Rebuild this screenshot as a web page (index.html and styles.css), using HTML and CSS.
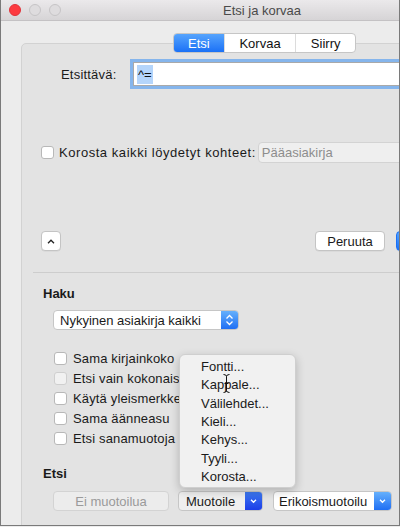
FILE: index.html
```html
<!DOCTYPE html>
<html lang="fi">
<head>
<meta charset="utf-8">
<title>Etsi ja korvaa</title>
<link rel="stylesheet" href="styles.css">
</head>
<body>
<div class="window">
  <div class="titlebar">
    <div class="lights">
      <span class="light red"></span>
      <span class="light"></span>
      <span class="light"></span>
    </div>
    <div class="title">Etsi ja korvaa</div>
  </div>
  <div class="content">
    <div class="tabs">
      <span class="tab active t1">Etsi</span>
      <span class="tab t2">Korvaa</span>
      <span class="tab t3">Siirry</span>
    </div>
    <div class="panel">
      <div class="row find-row">
        <label class="find-label">Etsittävä:</label>
        <div class="find-input"><span class="sel">^=</span></div>
      </div>
      <div class="row highlight-row">
        <span class="check"></span>
        <span class="txt">Korosta kaikki löydetyt kohteet:</span>
        <div class="popup disabled">Pääasiakirja</div>
      </div>
      <div class="row btn-row">
        <span class="btn up"><svg width="8" height="5" viewBox="0 0 8 5"><path d="M1 4.2 L4 1.2 L7 4.2" fill="none" stroke="#222" stroke-width="1.3"/></svg></span>
        <span class="btn cancel">Peruuta</span>
        <span class="btn default"></span>
      </div>
      <div class="sep"></div>
      <div class="heading h-haku">Haku</div>
      <div class="select scope">
        <span class="select-text">Nykyinen asiakirja kaikki</span>
        <span class="arrow"><svg width="9" height="12" viewBox="0 0 9 12"><path d="M1.5 4.5 L4.5 1.5 L7.5 4.5 M1.5 7.5 L4.5 10.5 L7.5 7.5" fill="none" stroke="#fff" stroke-width="1.3"/></svg></span>
      </div>
      <ul class="options">
        <li><span class="check"></span><span class="opt">Sama kirjainkoko</span></li>
        <li><span class="check dim"></span><span class="opt">Etsi vain kokonaiset sanat</span></li>
        <li><span class="check"></span><span class="opt">Käytä yleismerkkejä</span></li>
        <li><span class="check"></span><span class="opt">Sama äänneasu</span></li>
        <li><span class="check"></span><span class="opt">Etsi sanamuotoja</span></li>
      </ul>
      <div class="heading h-etsi">Etsi</div>
      <div class="row fmt-row">
        <span class="btn nofmt">Ei muotoilua</span>
        <div class="select fmt pressed">
          <span class="select-text">Muotoile</span>
          <span class="arrow"><svg width="9" height="6" viewBox="0 0 9 6"><path d="M2 1.8 L4.5 4.3 L7 1.8" fill="none" stroke="#fff" stroke-width="1.3"/></svg></span>
        </div>
        <div class="select special">
          <span class="select-text">Erikoismuotoilu</span>
          <span class="arrow"><svg width="9" height="6" viewBox="0 0 9 6"><path d="M2 1.8 L4.5 4.3 L7 1.8" fill="none" stroke="#fff" stroke-width="1.3"/></svg></span>
        </div>
      </div>
    </div>
  </div>
  <ul class="menu">
    <li>Fontti...</li>
    <li>Kappale...</li>
    <li>Välilehdet...</li>
    <li>Kieli...</li>
    <li>Kehys...</li>
    <li>Tyyli...</li>
    <li>Korosta...</li>
  </ul>
  <svg class="ibeam" width="7" height="19" viewBox="0 0 7 19"><path d="M0.5 0.5 Q3.5 0.5 3.5 2.5 Q3.5 0.5 6.5 0.5 M3.5 2.5 V16.5 M0.5 18.5 Q3.5 18.5 3.5 16.5 Q3.5 18.5 6.5 18.5 M1.5 9.5 H5.5" fill="none" stroke="#111" stroke-width="1"/></svg>
</div>
</body>
</html>
```

FILE: styles.css
```css
* { box-sizing: border-box; }
html, body { margin: 0; padding: 0; background: #ececec; }
body {
  font-family: "Liberation Sans", Arial, sans-serif;
  font-size: 13px;
  color: #1a1a1a;
}
.window {
  position: relative;
  width: 400px;
  height: 526px;
  overflow: hidden;
  background: #ececec;
  border-left: 1px solid #7a7a7a;
  border-right: 1px solid #7a7a7a;
  border-bottom: 1px solid #7a7a7a;
}
.titlebar {
  height: 21px;
  display: flex;
  align-items: center;
  background: linear-gradient(#ebe9eb, #d6d4d6);
  border-bottom: 1px solid #c4c2c4;
}
.lights { display: flex; gap: 8px; margin-left: 8px; }
.light {
  width: 12px; height: 12px; border-radius: 50%;
  background: #dedcde;
  border: 1px solid #c6c4c6;
}
.light.red { background: #fd3b41; border-color: #e0333a; }
.title {
  margin-left: 162px;
  color: #4a4a4a;
  font-size: 13px;
}
.content { padding-left: 20px; padding-top: 12px; }
.tabs {
  position: relative;
  z-index: 1;
  display: flex;
  margin-left: 152px;
  height: 20px;
  margin-bottom: -10px;
  width: 183px;
  background: #fff;
  border: 1px solid #c6c6c6;
  border-radius: 4px;
  overflow: hidden;
}
.tab {
  display: flex; align-items: center; justify-content: center;
  height: 100%;
  border-left: 1px solid #dcdcdc;
  color: #111;
}
.tab.t1 { width: 50px; border-left: none; }
.tab.t2 { width: 72px; }
.tab.t3 { width: 60px; }
.tab.active {
  background: linear-gradient(#56a4fd, #1b71f6);
  color: #fff;
}
.panel {
  width: 440px;
  height: 520px;
  background: #e3e3e3;
  border: 1px solid #d2d2d2;
  border-radius: 5px;
  display: flex;
  flex-direction: column;
}
.row { display: flex; align-items: center; }
.find-row { margin-top: 18px; height: 24px; }
.find-label { margin-left: 39px; width: 72px; letter-spacing: 0.2px; }
.find-input {
  height: 24px;
  width: 300px;
  background: #fff;
  border: 1px solid #a9a9a9;
  box-shadow: 0 0 0 3px #85b5ec;
  display: flex; align-items: center;
  padding-left: 3px;
}
.sel { background: #b4d5fb; padding: 1px 1px; line-height: 17px; color: #111; }
.highlight-row { margin-top: 56px; height: 21px; }
.check {
  display: inline-block;
  width: 13px; height: 13px;
  background: #fff;
  border: 1px solid #b8b8b8;
  border-radius: 3px;
  flex: none;
}
.check.dim { background: #f1f1f1; border-color: #cfcfcf; }
.highlight-row .check { margin-left: 19px; }
.highlight-row .txt { margin-left: 5px; letter-spacing: 0.55px; white-space: nowrap; }
.popup.disabled {
  margin-left: 2px;
  height: 21px;
  width: 200px;
  background: #efefef;
  border: 1px solid #d3d3d3;
  border-radius: 4px;
  color: #8d8d8d;
  padding-left: 3px;
  display: flex; align-items: center;
}
.btn {
  display: inline-flex; align-items: center; justify-content: center;
  height: 20px;
  background: #fff;
  border: 1px solid #c4c4c4;
  border-radius: 4px;
  box-shadow: 0 0.5px 0 rgba(0,0,0,0.08);
}
.btn-row { margin-top: 68px; height: 20px; }
.btn.up { width: 20px; margin-left: 19px; }
.btn.cancel { width: 70px; margin-left: 254px; }
.btn.default { width: 40px; margin-left: 11px; background: linear-gradient(#56a4fd, #1b71f6); border-color: #1b71f6; }
.sep { margin-top: 21px; margin-left: 11px; height: 1px; background: #cdcdcd; }
.heading { font-weight: bold; margin-left: 21px; line-height: 16px; height: 16px; }
.h-haku { margin-top: 13px; }
.select {
  display: flex; align-items: center;
  height: 20px;
  background: #fff;
  border: 1px solid #c6c6c6;
  border-radius: 4px;
  overflow: hidden;
}
.select-text { flex: 1; padding-left: 6px; white-space: nowrap; }
.arrow {
  align-self: stretch;
  width: 17px;
  display: flex; align-items: center; justify-content: center;
  background: linear-gradient(#65b0fc, #1f6ff4);
}
.scope { margin-top: 8px; margin-left: 31px; width: 186px; }
.options { list-style: none; margin: 18px 0 0 32px; padding: 0; width: 125px; }
.options li { height: 20px; display: flex; align-items: center; white-space: nowrap; overflow: hidden; }
.options .check { margin-right: 6px; }
.opt { letter-spacing: 0.15px; }
.h-etsi { margin-top: 18px; }
.fmt-row { margin-top: 9px; height: 20px; }
.btn.nofmt {
  margin-left: 31px; width: 116px;
  background: #ececec; border-color: #d3d3d3; color: #9a9a9a; box-shadow: none;
}
.select.fmt { margin-left: 9px; width: 85px; }
.select.fmt .select-text { padding-left: 7px; }
.select.pressed { background: #efefef; }
.select.pressed .arrow { background: linear-gradient(#3d79f0, #1c3ee8); }
.select.special { margin-left: 10px; width: 119px; }
.select.special .select-text { padding-left: 5px; }
.menu {
  position: absolute;
  left: 178px; top: 354px;
  width: 117px; height: 134px;
  margin: 0;
  list-style: none;
  padding: 3px 0 0 21px;
  background: #f1f1f1;
  border: 1px solid #cfcfcf;
  border-radius: 6px;
  box-shadow: 0 3px 10px rgba(0,0,0,0.22);
}
.menu li { height: 18.33px; line-height: 18.33px; color: #1a1a1a; }
.ibeam { position: absolute; left: 222px; top: 374px; }
```
